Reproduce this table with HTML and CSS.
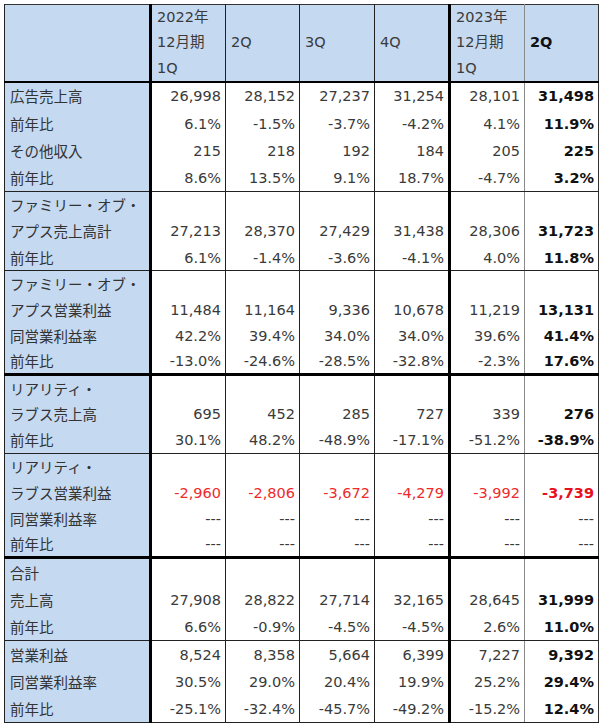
FILE: index.html
```html
<!DOCTYPE html>
<html lang="ja">
<head>
<meta charset="utf-8">
<link rel="stylesheet" href="styles.css">
</head>
<body>
<table class="grid">
  <colgroup>
    <col class="c-label"><col class="c-a"><col class="c-b"><col class="c-a"><col class="c-a"><col class="c-a"><col class="c-b">
  </colgroup>
  <thead>
    <tr class="head">
      <th class="lab"></th>
      <th class="h1 thick-l">2022年<br>12月期<br>1Q</th>
      <th>2Q</th>
      <th>3Q</th>
      <th>4Q</th>
      <th class="h1 thick-l">2023年<br>12月期<br>1Q</th>
      <th class="last bold">2Q</th>
    </tr>
  </thead>
  <tbody>
    <tr class="r28"><td class="lab">広告売上高</td><td class="thick-l">26,998</td><td>28,152</td><td>27,237</td><td>31,254</td><td class="thick-l">28,101</td><td class="last bold">31,498</td></tr>
    <tr class="r28"><td class="lab">前年比</td><td class="thick-l">6.1%</td><td>-1.5%</td><td>-3.7%</td><td>-4.2%</td><td class="thick-l">4.1%</td><td class="last bold">11.9%</td></tr>
    <tr class="r27"><td class="lab">その他収入</td><td class="thick-l">215</td><td>218</td><td>192</td><td>184</td><td class="thick-l">205</td><td class="last bold">225</td></tr>
    <tr class="r27 end"><td class="lab">前年比</td><td class="thick-l">8.6%</td><td>13.5%</td><td>9.1%</td><td>18.7%</td><td class="thick-l">-4.7%</td><td class="last bold">3.2%</td></tr>

    <tr class="r26"><td class="lab">ファミリー・オブ・</td><td class="thick-l"></td><td></td><td></td><td></td><td class="thick-l"></td><td class="last"></td></tr>
    <tr class="r27"><td class="lab">アプス売上高計</td><td class="thick-l">27,213</td><td>28,370</td><td>27,429</td><td>31,438</td><td class="thick-l">28,306</td><td class="last bold">31,723</td></tr>
    <tr class="r26 end"><td class="lab">前年比</td><td class="thick-l">6.1%</td><td>-1.4%</td><td>-3.6%</td><td>-4.1%</td><td class="thick-l">4.0%</td><td class="last bold">11.8%</td></tr>

    <tr class="r26"><td class="lab">ファミリー・オブ・</td><td class="thick-l"></td><td></td><td></td><td></td><td class="thick-l"></td><td class="last"></td></tr>
    <tr class="r26"><td class="lab">アプス営業利益</td><td class="thick-l">11,484</td><td>11,164</td><td>9,336</td><td>10,678</td><td class="thick-l">11,219</td><td class="last bold">13,131</td></tr>
    <tr class="r26"><td class="lab">同営業利益率</td><td class="thick-l">42.2%</td><td>39.4%</td><td>34.0%</td><td>34.0%</td><td class="thick-l">39.6%</td><td class="last bold">41.4%</td></tr>
    <tr class="r26 end-thick"><td class="lab">前年比</td><td class="thick-l">-13.0%</td><td>-24.6%</td><td>-28.5%</td><td>-32.8%</td><td class="thick-l">-2.3%</td><td class="last bold">17.6%</td></tr>

    <tr class="r26"><td class="lab">リアリティ・</td><td class="thick-l"></td><td></td><td></td><td></td><td class="thick-l"></td><td class="last"></td></tr>
    <tr class="r26"><td class="lab">ラブス売上高</td><td class="thick-l">695</td><td>452</td><td>285</td><td>727</td><td class="thick-l">339</td><td class="last bold">276</td></tr>
    <tr class="r27 end"><td class="lab">前年比</td><td class="thick-l">30.1%</td><td>48.2%</td><td>-48.9%</td><td>-17.1%</td><td class="thick-l">-51.2%</td><td class="last bold">-38.9%</td></tr>

    <tr class="r26"><td class="lab">リアリティ・</td><td class="thick-l"></td><td></td><td></td><td></td><td class="thick-l"></td><td class="last"></td></tr>
    <tr class="r26"><td class="lab">ラブス営業利益</td><td class="thick-l neg">-2,960</td><td class="neg">-2,806</td><td class="neg">-3,672</td><td class="neg">-4,279</td><td class="thick-l neg">-3,992</td><td class="last bold neg">-3,739</td></tr>
    <tr class="r26"><td class="lab">同営業利益率</td><td class="thick-l">---</td><td>---</td><td>---</td><td>---</td><td class="thick-l">---</td><td class="last">---</td></tr>
    <tr class="r26 end-thick"><td class="lab">前年比</td><td class="thick-l">---</td><td>---</td><td>---</td><td>---</td><td class="thick-l">---</td><td class="last">---</td></tr>

    <tr class="r28"><td class="lab">合計</td><td class="thick-l"></td><td></td><td></td><td></td><td class="thick-l"></td><td class="last"></td></tr>
    <tr class="r28"><td class="lab">売上高</td><td class="thick-l">27,908</td><td>28,822</td><td>27,714</td><td>32,165</td><td class="thick-l">28,645</td><td class="last bold">31,999</td></tr>
    <tr class="r27 end"><td class="lab">前年比</td><td class="thick-l">6.6%</td><td>-0.9%</td><td>-4.5%</td><td>-4.5%</td><td class="thick-l">2.6%</td><td class="last bold">11.0%</td></tr>

    <tr class="r27"><td class="lab">営業利益</td><td class="thick-l">8,524</td><td>8,358</td><td>5,664</td><td>6,399</td><td class="thick-l">7,227</td><td class="last bold">9,392</td></tr>
    <tr class="r28"><td class="lab">同営業利益率</td><td class="thick-l">30.5%</td><td>29.0%</td><td>20.4%</td><td>19.9%</td><td class="thick-l">25.2%</td><td class="last bold">29.4%</td></tr>
    <tr class="r27 end"><td class="lab">前年比</td><td class="thick-l">-25.1%</td><td>-32.4%</td><td>-45.7%</td><td>-49.2%</td><td class="thick-l">-15.2%</td><td class="last bold">12.4%</td></tr>
  </tbody>
</table>
</body>
</html>
```
FILE: styles.css
```css
html, body {
  margin: 0;
  padding: 0;
  background: #ffffff;
}
body {
  padding: 4px 0 0 4px;
  font-family: "DejaVu Sans", "Noto Sans CJK JP", sans-serif;
  font-size: 14.5px;
  color: #3a3a3a;
}
.grid {
  border-collapse: collapse;
  table-layout: fixed;
  width: 594px;
  border: 1px solid #333;
}
.c-label { width: 146px; }
.c-a { width: 75px; }
.c-b { width: 74px; }

.grid th, .grid td {
  padding: 0 4px 0 4px;
  border-left: 1px solid #222;
  white-space: nowrap;
  overflow: hidden;
  line-height: 20px;
}
.grid th {
  background: #c5d9f1;
  font-weight: normal;
  text-align: left;
  vertical-align: middle;
  padding-left: 5px;
}
.head { height: 76px; }
.head th { border-bottom: 2px solid #000; line-height: 25.3px; }
.grid th.bold { font-weight: bold; color: #111; }

.grid td { text-align: right; vertical-align: middle; }
.grid td.lab {
  text-align: left;
  background: #c5d9f1;
  padding-left: 5px;
  color: #333;
  font-family: "Noto Sans CJK JP", sans-serif;
}
.grid .thick-l { border-left: 3px solid #000; }
.grid .last { border-left: 1px solid #8a8a8a; }
.grid td.bold { font-weight: bold; color: #111; }
.grid td.neg { color: #ee2a2a; }
.grid td.bold.neg { color: #e8101c; }

.r25 { height: 25px; }
.r26 { height: 26px; }
.r27 { height: 27px; }
.r28 { height: 28px; }

.end td { border-bottom: 1px solid #222; }
.end-thick td { border-bottom: 3px solid #000; }
```
